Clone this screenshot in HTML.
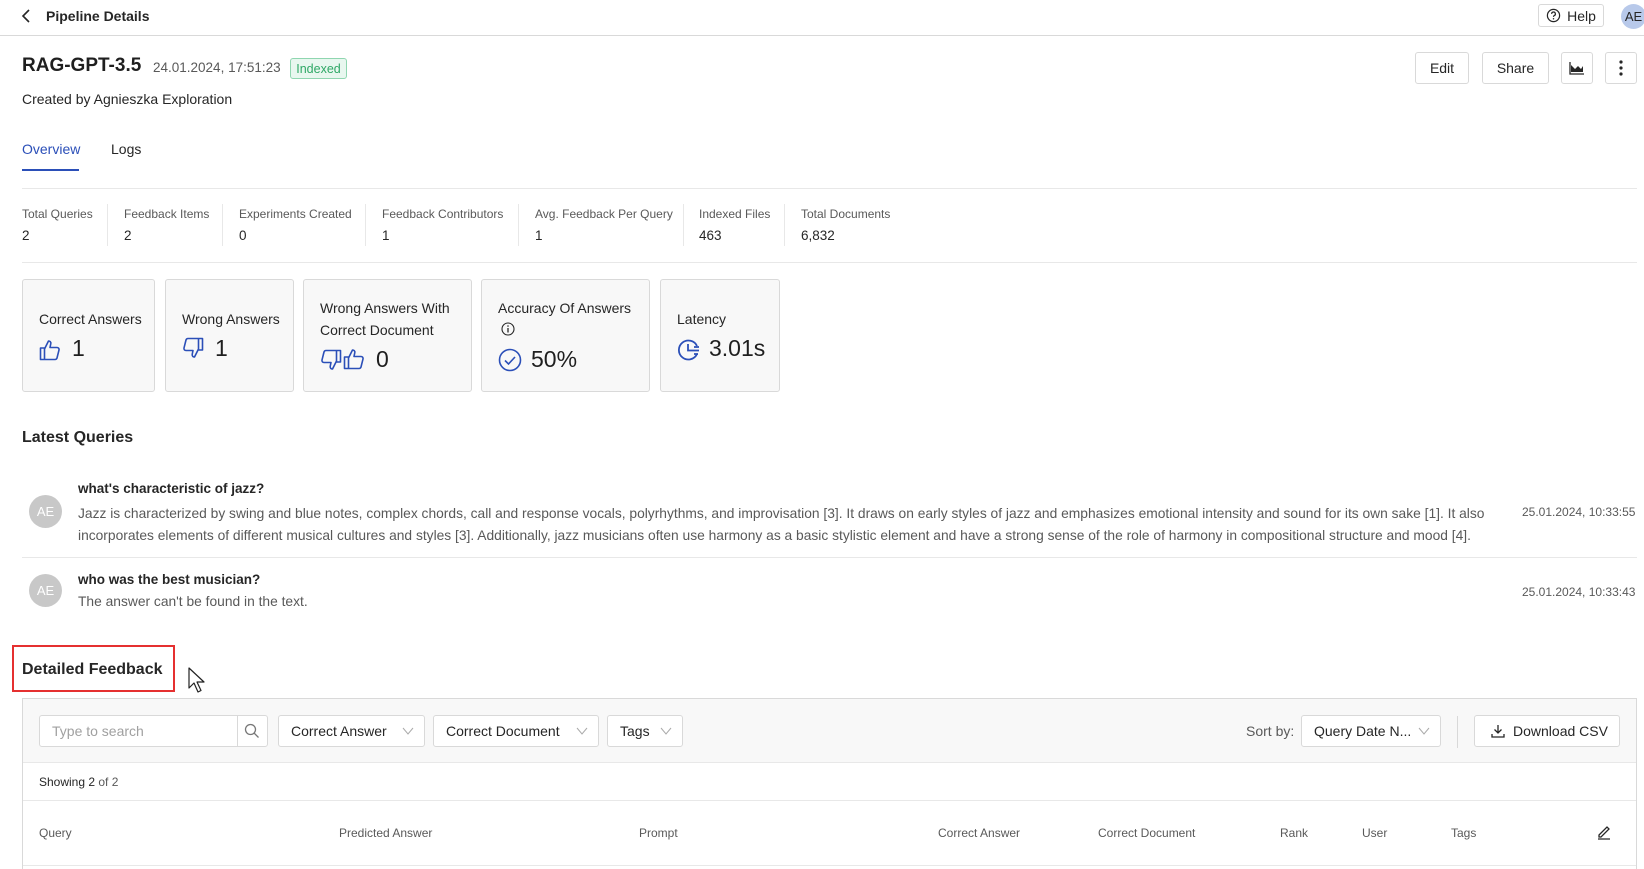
<!DOCTYPE html>
<html><head><meta charset="utf-8"><style>
*{box-sizing:border-box;margin:0;padding:0}
body{width:1644px;height:869px;overflow:hidden;background:#fff;font-family:"Liberation Sans",sans-serif;color:#262626;position:relative;font-size:13.5px}
.a{position:absolute;white-space:nowrap}
.btn{position:absolute;border:1px solid #d9d9d9;border-radius:3px;background:#fff;display:flex;align-items:center;justify-content:center;font-size:14px}
.lbl{font-size:12px;color:#595959}
.val{font-size:13.5px;color:#262626}
.vs{position:absolute;top:204px;width:1px;height:42px;background:#e8e8e8}
.card{position:absolute;top:279px;height:113px;border:1px solid #d9d9d9;border-radius:3px;background:#f8f8f8}
.card .t{position:absolute;left:16px;font-size:14px;color:#262626;line-height:22px}
.card .n{position:absolute;font-size:23px;color:#1f1f1f}
.av{position:absolute;width:33px;height:33px;border-radius:50%;background:#c8c8c8;color:#fff;font-size:13px;display:flex;align-items:center;justify-content:center}
.sel{position:absolute;top:715px;height:32px;border:1px solid #d9d9d9;border-radius:3px;background:#fff;font-size:14px;display:flex;align-items:center;padding-left:12px}
.sel svg{position:absolute;right:10px;top:10px}
.th{position:absolute;top:826px;font-size:12px;color:#595959}
</style></head><body>
<svg class="a" style="left:21px;top:9px" width="12" height="14" viewBox="0 0 12 14"><path d="M8 1L2 7l6 6" stroke="#262626" stroke-width="1.6" fill="none"/></svg>
<div class="a" style="left:46px;top:8px;font-size:14px;font-weight:bold;color:#262626">Pipeline Details</div>
<div class="btn" style="left:1538px;top:4px;width:66px;height:23px;font-size:14px"><svg width="15" height="15" viewBox="0 0 16 16" style="margin-right:6px"><circle cx="8" cy="8" r="6.5" stroke="#262626" stroke-width="1.3" fill="none"/><path d="M6 6.3a2 2 0 1 1 2.6 1.9c-.5.2-.6.6-.6 1.2" stroke="#262626" stroke-width="1.3" fill="none"/><circle cx="8" cy="11.5" r=".8" fill="#262626"/></svg>Help</div>
<div class="a" style="left:1621px;top:4px;width:25px;height:25px;border-radius:50%;background:#b8c9ea;font-size:13px;display:flex;align-items:center;justify-content:center;color:#262626">AE</div>
<div class="a" style="left:0;top:35px;width:1644px;height:1px;background:#d9d9d9"></div>
<div class="a" style="left:22px;top:55px;font-size:19px;font-weight:bold;color:#1f1f1f">RAG-GPT-3.5</div>
<div class="a" style="left:153px;top:60px;font-size:13.5px;color:#595959">24.01.2024, 17:51:23</div>
<div class="a" style="left:290px;top:58px;width:57px;height:21px;border:1px solid #8fd6b0;background:#e8f7ef;color:#2fa866;border-radius:3px;font-size:12.5px;display:flex;align-items:center;justify-content:center">Indexed</div>
<div class="a" style="left:22px;top:91px;font-size:14px">Created by Agnieszka Exploration</div>
<div class="btn" style="left:1415px;top:52px;width:54px;height:32px">Edit</div>
<div class="btn" style="left:1482px;top:52px;width:67px;height:32px">Share</div>
<div class="btn" style="left:1561px;top:52px;width:32px;height:32px"><svg width="16" height="14" viewBox="0 0 16 14"><path d="M2 11L2 4L6 8L9 5L12 8L14 5L14 11Z" fill="#262626"/><path d="M1 1v12h14" stroke="#262626" stroke-width="1.3" fill="none"/></svg></div>
<div class="btn" style="left:1605px;top:52px;width:32px;height:32px"><svg width="4" height="16"><circle cx="2" cy="2" r="1.6" fill="#262626"/><circle cx="2" cy="8" r="1.6" fill="#262626"/><circle cx="2" cy="14" r="1.6" fill="#262626"/></svg></div>
<div class="a" style="left:22px;top:141px;font-size:14px;color:#2b4fb8">Overview</div>
<div class="a" style="left:22px;top:169px;width:57px;height:2px;background:#2b4fb8"></div>
<div class="a" style="left:111px;top:141px;font-size:14px">Logs</div>
<div class="a" style="left:22px;top:188px;width:1615px;height:1px;background:#e8e8e8"></div>
<div class="a lbl" style="left:22px;top:207px">Total Queries</div><div class="a val" style="left:22px;top:228px">2</div>
<div class="vs" style="left:107px"></div>
<div class="a lbl" style="left:124px;top:207px">Feedback Items</div><div class="a val" style="left:124px;top:228px">2</div>
<div class="vs" style="left:222px"></div>
<div class="a lbl" style="left:239px;top:207px">Experiments Created</div><div class="a val" style="left:239px;top:228px">0</div>
<div class="vs" style="left:365px"></div>
<div class="a lbl" style="left:382px;top:207px">Feedback Contributors</div><div class="a val" style="left:382px;top:228px">1</div>
<div class="vs" style="left:518px"></div>
<div class="a lbl" style="left:535px;top:207px">Avg. Feedback Per Query</div><div class="a val" style="left:535px;top:228px">1</div>
<div class="vs" style="left:683px"></div>
<div class="a lbl" style="left:699px;top:207px">Indexed Files</div><div class="a val" style="left:699px;top:228px">463</div>
<div class="vs" style="left:784px"></div>
<div class="a lbl" style="left:801px;top:207px">Total Documents</div><div class="a val" style="left:801px;top:228px">6,832</div>
<div class="a" style="left:22px;top:262px;width:1615px;height:1px;background:#e8e8e8"></div>
<div class="card" style="left:22px;width:133px"><div class="t" style="top:28px">Correct Answers</div>
<svg class="a" style="left:16px;top:59px" width="22" height="22" viewBox="0 0 22 22"><path d="M1.5 9h4v11.5h-4zM5.5 10l4-8c1.5 0 2.5 1 2.3 2.6L11 8.5h7c1.4 0 2.3 1.2 2 2.5l-2 8c-.3.9-1 1.5-2 1.5H5.5" stroke="#2b4fb8" stroke-width="1.6" fill="none" stroke-linejoin="round"/></svg>
<div class="n" style="left:49px;top:55px">1</div></div>
<div class="card" style="left:165px;width:129px"><div class="t" style="top:28px">Wrong Answers</div>
<svg class="a" style="left:16px;top:57px" width="22" height="22" viewBox="0 0 22 22"><g transform="rotate(180 11 11)"><path d="M1.5 9h4v11.5h-4zM5.5 10l4-8c1.5 0 2.5 1 2.3 2.6L11 8.5h7c1.4 0 2.3 1.2 2 2.5l-2 8c-.3.9-1 1.5-2 1.5H5.5" stroke="#2b4fb8" stroke-width="1.6" fill="none" stroke-linejoin="round"/></g></svg>
<div class="n" style="left:49px;top:55px">1</div></div>
<div class="card" style="left:303px;width:169px"><div class="t" style="top:17px">Wrong Answers With<br>Correct Document</div>
<svg class="a" style="left:16px;top:69px" width="22" height="22" viewBox="0 0 22 22"><g transform="rotate(180 11 11)"><path d="M1.5 9h4v11.5h-4zM5.5 10l4-8c1.5 0 2.5 1 2.3 2.6L11 8.5h7c1.4 0 2.3 1.2 2 2.5l-2 8c-.3.9-1 1.5-2 1.5H5.5" stroke="#2b4fb8" stroke-width="1.6" fill="none" stroke-linejoin="round"/></g></svg>
<svg class="a" style="left:39px;top:68px" width="22" height="22" viewBox="0 0 22 22"><path d="M1.5 9h4v11.5h-4zM5.5 10l4-8c1.5 0 2.5 1 2.3 2.6L11 8.5h7c1.4 0 2.3 1.2 2 2.5l-2 8c-.3.9-1 1.5-2 1.5H5.5" stroke="#2b4fb8" stroke-width="1.6" fill="none" stroke-linejoin="round"/></svg>
<div class="n" style="left:72px;top:66px">0</div></div>
<div class="card" style="left:481px;width:169px"><div class="t" style="top:17px">Accuracy Of Answers</div>
<svg class="a" style="left:19px;top:42px" width="14" height="14" viewBox="0 0 14 14"><circle cx="7" cy="7" r="6" stroke="#262626" stroke-width="1.1" fill="none"/><path d="M7 6v4.5" stroke="#262626" stroke-width="1.3"/><circle cx="7" cy="4" r=".8" fill="#262626"/></svg>
<svg class="a" style="left:16px;top:68px" width="24" height="24" viewBox="0 0 24 24"><circle cx="12" cy="12" r="10.5" stroke="#2b4fb8" stroke-width="1.6" fill="none"/><path d="M7 12.5l3.5 3.5L17 9" stroke="#2b4fb8" stroke-width="1.6" fill="none"/></svg>
<div class="n" style="left:49px;top:66px">50%</div></div>
<div class="card" style="left:660px;width:120px"><div class="t" style="top:28px">Latency</div>
<svg class="a" style="left:16px;top:58px" width="24" height="24" viewBox="0 0 24 24"><path d="M20 8A9.5 9.5 0 1 0 20 16" stroke="#2b4fb8" stroke-width="1.8" fill="none"/><path d="M11 6v6.5h4M15 12.5h7M17 9h5M17 16h4" stroke="#2b4fb8" stroke-width="1.8" fill="none"/></svg>
<div class="n" style="left:48px;top:55px">3.01s</div></div>
<div class="a" style="left:22px;top:429px;font-size:16px;font-weight:bold">Latest Queries</div>
<div class="av" style="left:29px;top:495px">AE</div>
<div class="a" style="left:78px;top:481px;font-size:13.5px;font-weight:bold">what's characteristic of jazz?</div>
<div class="a" style="left:78px;top:503px;font-size:13.8px;color:#595959;line-height:22px">Jazz is characterized by swing and blue notes, complex chords, call and response vocals, polyrhythms, and improvisation [3]. It draws on early styles of jazz and emphasizes emotional intensity and sound for its own sake [1]. It also<br>incorporates elements of different musical cultures and styles [3]. Additionally, jazz musicians often use harmony as a basic stylistic element and have a strong sense of the role of harmony in compositional structure and mood [4].</div>
<div class="a" style="left:1522px;top:505px;font-size:12px;color:#595959">25.01.2024, 10:33:55</div>
<div class="a" style="left:22px;top:557px;width:1615px;height:1px;background:#e8e8e8"></div>
<div class="av" style="left:29px;top:574px">AE</div>
<div class="a" style="left:78px;top:572px;font-size:13.5px;font-weight:bold">who was the best musician?</div>
<div class="a" style="left:78px;top:594px;font-size:13.8px;color:#595959">The answer can't be found in the text.</div>
<div class="a" style="left:1522px;top:585px;font-size:12px;color:#595959">25.01.2024, 10:33:43</div>
<div class="a" style="left:12px;top:645px;width:163px;height:47px;border:2px solid #e53030"></div>
<div class="a" style="left:22px;top:661px;font-size:16px;font-weight:bold">Detailed Feedback</div>
<svg class="a" style="left:188px;top:667px" width="20" height="28" viewBox="0 0 20 28"><path d="M1 1v20l5-5 4 9 3-1.5-4-8.5h7z" fill="#fff" stroke="#222" stroke-width="1.2" stroke-linejoin="round"/></svg>
<div class="a" style="left:22px;top:698px;width:1615px;height:171px;border:1px solid #d9d9d9;border-bottom:none"></div>
<div class="a" style="left:23px;top:699px;width:1613px;height:64px;background:#f8f8f8;border-bottom:1px solid #e8e8e8"></div>
<div class="sel" style="left:39px;width:229px;color:#a0a0a0">Type to search
<div style="position:absolute;left:197px;top:0;width:1px;height:30px;background:#d9d9d9"></div>
<svg style="position:absolute;right:7px;top:7px" width="16" height="16" viewBox="0 0 16 16"><circle cx="6.5" cy="6.5" r="5" stroke="#777" stroke-width="1.3" fill="none"/><path d="M10 10l4.5 4.5" stroke="#777" stroke-width="1.3"/></svg></div>
<div class="sel" style="left:278px;width:147px">Correct Answer<svg width="12" height="10"><path d="M1 2l5 6 5-6" stroke="#aaa" fill="none"/></svg></div>
<div class="sel" style="left:433px;width:166px">Correct Document<svg width="12" height="10"><path d="M1 2l5 6 5-6" stroke="#aaa" fill="none"/></svg></div>
<div class="sel" style="left:607px;width:76px">Tags<svg width="12" height="10"><path d="M1 2l5 6 5-6" stroke="#aaa" fill="none"/></svg></div>
<div class="a" style="left:1246px;top:723px;font-size:14px;color:#595959">Sort by:</div>
<div class="sel" style="left:1301px;width:140px">Query Date N...<svg width="12" height="10"><path d="M1 2l5 6 5-6" stroke="#aaa" fill="none"/></svg></div>
<div class="a" style="left:1457px;top:716px;width:1px;height:32px;background:#d9d9d9"></div>
<div class="sel" style="left:1474px;width:146px;padding-left:16px"><svg style="position:static;margin-right:8px" width="14" height="14" viewBox="0 0 14 14"><path d="M7 1v8M3.5 5.5L7 9l3.5-3.5M1 10v3h12v-3" stroke="#262626" stroke-width="1.3" fill="none"/></svg>Download CSV</div>
<div class="a" style="left:39px;top:775px;font-size:12px;color:#262626">Showing 2 <span style="color:#595959">of 2</span></div>
<div class="a" style="left:23px;top:800px;width:1613px;height:1px;background:#e8e8e8"></div>
<div class="th" style="left:39px">Query</div>
<div class="th" style="left:339px">Predicted Answer</div>
<div class="th" style="left:639px">Prompt</div>
<div class="th" style="left:938px">Correct Answer</div>
<div class="th" style="left:1098px">Correct Document</div>
<div class="th" style="left:1280px">Rank</div>
<div class="th" style="left:1362px">User</div>
<div class="th" style="left:1451px">Tags</div>
<svg class="a" style="left:1596px;top:824px" width="16" height="16" viewBox="0 0 16 16"><path d="M3 11l8-8 2 2-8 8H3zM2 15h12" stroke="#262626" stroke-width="1.3" fill="none"/></svg>
<div class="a" style="left:23px;top:865px;width:1613px;height:1px;background:#e8e8e8"></div>
</body></html>
